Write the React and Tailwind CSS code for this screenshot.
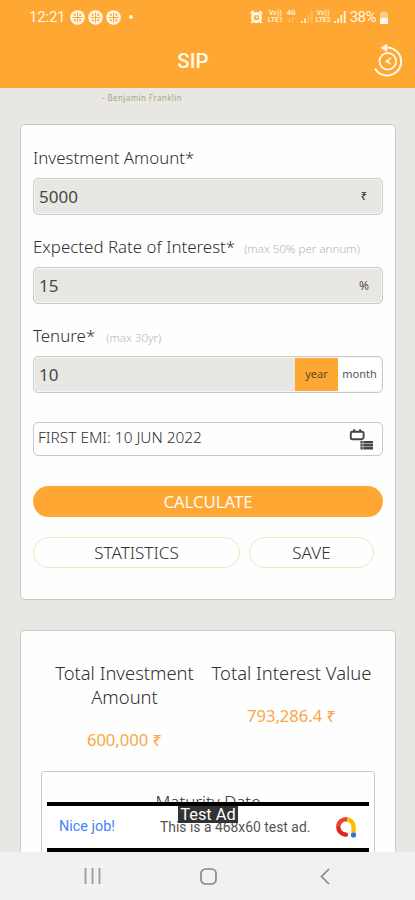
// ⏰ STATUS BAR ICONS
function ChatDot() {
  return (
    <svg width="15" height="15" viewBox="0 0 15 15">
      <circle cx="7.5" cy="7.5" r="7.3" fill="#fff8e8" />
      <path d="M7.5 2.5v10M2.5 7.5h10" stroke="#ffa733" strokeWidth="1" />
      <path d="M4.8 3.8v2M10.2 3.8v2M4.8 9.2v2M10.2 9.2v2" stroke="#ffa733" strokeWidth="2" />
    </svg>
  );
}

function AlarmIcon() {
  return (
    <svg width="13" height="14" viewBox="0 0 13 14">
      <circle cx="6.5" cy="7.5" r="4.1" fill="none" stroke="#fff8e8" strokeWidth="2.8" />
      <path d="M.7 3.8 3.7 1M12.3 3.8 9.3 1M2.7 11.3 1.5 13M10.3 11.3l1.2 1.7" stroke="#fff8e8" strokeWidth="2" />
      <path d="M6.3 5v3l2-.8" stroke="#fff8e8" strokeWidth="1" fill="none" />
    </svg>
  );
}

function Signal({ weak }) {
  return (
    <svg width="12" height="12" viewBox="0 0 12 12" fill="#fff3dc">
      <path d="M0 10h1.8v2H0zM3.2 7.5H5V12H3.2z" />
      <path d="M6.4 4h1.8v8H6.4zM9.8 0h1.8v12H9.8z" opacity={weak ? 0.3 : 1} />
    </svg>
  );
}

function SimLabel({ line }) {
  return (
    <div className="flex w-[17px] flex-col items-center text-[7px] leading-[7px] font-bold text-[#fff3dc] opacity-90">
      <span>Vo))</span>
      <span>{line}</span>
    </div>
  );
}

// 🕑 HISTORY
function HistoryIcon() {
  return (
    <svg width="32" height="34" viewBox="0 0 32 34" fill="none" stroke="#fff8e8">
      <path d="M13 3.7A14 14 0 1 1 3 24.5" strokeWidth="2" />
      <path d="M10 4 14.2 1.2v5.2z" fill="#fff8e8" strokeWidth="1.6" />
      <circle cx="15.8" cy="17.3" r="8.3" strokeWidth="1.8" />
      <path d="m19 14-4.6 3.3 4.2 2.8" strokeWidth="1.3" />
      <circle cx="15.4" cy="17.3" r="1.8" fill="#fff8e8" stroke="none" />
    </svg>
  );
}

function CalendarIcon() {
  return (
    <svg width="25" height="21" viewBox="0 0 25 21" fill="none" stroke="#444">
      <path d="M13 10.3H3.2a1.4 1.4 0 0 1-1.4-1.4V4.2a1.4 1.4 0 0 1 1.4-1.4h10a1.4 1.4 0 0 1 1.4 1.4v4.5z" strokeWidth="1.9" />
      <path d="M5.2.3v3M11.2.3v3" strokeWidth="2" />
      <path d="M11.5 12H24v8.5H11.5z" fill="#444" stroke="none" />
      <path d="M11.5 14.6H24M11.5 17.6H24M14 12v8.5" stroke="#d8d8d8" strokeWidth=".7" />
    </svg>
  );
}

function AdLogo() {
  return (
    <svg width="22" height="22" viewBox="0 0 22 22" fill="none">
      <path d="M11 3.2A7.6 7.6 0 0 1 18.6 11v8" stroke="#fbbc04" strokeWidth="4.4" />
      <path d="M12 3.3A7.7 7.7 0 0 0 3.3 11" stroke="#ea4335" strokeWidth="4.4" />
      <path d="M3.3 10.8A7.7 7.7 0 0 0 11 18.6" stroke="#d92c20" strokeWidth="4.4" />
      <circle cx="11" cy="18.6" r="2.2" fill="#d92c20" />
      <circle cx="18.5" cy="19" r="2.6" fill="#2878ed" />
    </svg>
  );
}

function Field({ label, hint, value, children }) {
  return (
    <div className="h-[89px]">
      <div className="flex h-[42px] items-center pt-px whitespace-nowrap">
        <span className="text-[16.9px] font-light text-[#303030]">{label}</span>
        {hint}
      </div>
      <div className="flex h-[37px] items-stretch overflow-hidden rounded-[5px] border border-[#c9c9c7] bg-[#f6f6f4] p-px">
        <span className="flex flex-1 items-center bg-[#e8e7e3] pl-[4px] text-[17px] text-[#484848]">{value}</span>
        {children}
      </div>
    </div>
  );
}

export default function App() {
  return (
    <div className="relative flex h-[900px] w-[415px] flex-col overflow-hidden bg-[#e8e7e3] font-['Noto_Sans','Open_Sans',sans-serif]">

      {/* HEADER */}
      <header className="h-[88px] shrink-0 bg-[#ffa733] font-['Roboto',sans-serif] text-[#fff8e8]">
        <div className="flex h-[34px] items-center pr-[27px] pl-[29px]">
          <span className="w-[41px] text-[15px] tracking-[-0.2px]">12:21</span>
          <div className="flex gap-[3px]">
            <ChatDot />
            <ChatDot />
            <ChatDot />
          </div>
          <span className="ml-[8px] size-[4px] rounded-full bg-[#fff8e8]" />
          <div className="ml-auto flex items-center">
            <AlarmIcon />
            <div className="ml-[4px]"><SimLabel line="LTE1" /></div>
            <div className="mr-[5px] ml-[3px] flex flex-col items-center text-[7px] leading-[7px] font-bold opacity-90">
              <span>4G</span>
              <span>↓↑</span>
            </div>
            <Signal weak />
            <div className="mx-[2px]"><SimLabel line="LTE2" /></div>
            <Signal />
            <span className="ml-[4px] text-[15px] tracking-[-0.5px]">38%</span>
            <svg className="ml-[4px]" width="8" height="13" viewBox="0 0 8 13" fill="#fff8e8">
              <path d="M2.5 0h3v1.5H8V7H0V1.5h2.5z" opacity=".45" />
              <path d="M0 7h8v6H0z" />
            </svg>
          </div>
        </div>
        <div className="flex h-[54px] items-center pr-[11px] pl-[14px]">
          <h1 className="flex-1 text-center text-[20.5px] font-medium">SIP</h1>
          <HistoryIcon />
        </div>
      </header>

      {/* PAGE */}
      <main className="flex h-[764px] shrink-0 flex-col overflow-hidden pr-[19px] pl-[20px]">
        <p className="h-[36px] shrink-0 pt-[4px] pl-[82px] text-[8px] leading-[12px] tracking-[0.4px] text-[#a7a77f]">
          - Benjamin Franklin
        </p>

        {/* CALCULATOR */}
        <section className="h-[476px] shrink-0 rounded-[5px] border border-[#c9c9c6] bg-[#fefefe] px-[12px] pt-[11px]">
          <Field label="Investment Amount*" value="5000">
            <span className="flex items-center bg-[#e8e7e3] pr-[14px] text-[11px] font-medium text-[#333]">₹</span>
          </Field>
          <Field
            label="Expected Rate of Interest*"
            value="15"
            hint={<span className="mt-[4px] ml-[9px] text-[11.6px] font-light text-[#b5b5b5]">(max 50% per annum)</span>}
          >
            <span className="flex items-center bg-[#e8e7e3] pr-[12px] text-[12px] text-[#555]">%</span>
          </Field>
          <Field
            label="Tenure*"
            value="10"
            hint={<span className="mt-[4px] ml-[11px] text-[11.6px] font-light text-[#b5b5b5]">(max 30yr)</span>}
          >
            <button className="w-[43px] bg-[#ffa733] text-[11px] text-[#654a25]">year</button>
            <button className="w-[43px] bg-white text-[11px] text-[#555]">month</button>
          </Field>

          <div className="mt-[19px] flex h-[34px] items-center justify-between rounded-[5px] border border-[#c9c9c9] pr-[8px] pl-[4px]">
            <span className="-mt-[2px] text-[15.4px] font-light text-[#303030]">FIRST EMI: 10 JUN 2022</span>
            <CalendarIcon />
          </div>

          <button className="mt-[30px] h-[31px] w-full rounded-full bg-[#ffa733] text-[16.7px] text-[#fffaf0]">
            CALCULATE
          </button>
          <div className="mt-[20px] flex gap-[9px] text-[17.1px] font-light text-[#303030]">
            <button className="h-[31px] w-[207px] rounded-full border border-[#eee5c1]">STATISTICS</button>
            <button className="h-[31px] w-[125px] rounded-full border border-[#eee5c1]">SAVE</button>
          </div>
        </section>

        {/* RESULT */}
        <section className="mt-[30px] h-[260px] shrink-0 rounded-[5px] border border-[#c9c9c6] bg-[#fefefe] px-[20px] pt-[30px]">
          <div className="flex h-[110px] text-center text-[18.4px] leading-[24px] font-light text-[#303030]">
            <div className="w-[167px]">
              <p>Total Investment Amount</p>
              <p className="mt-[19px] text-[16.6px] font-normal text-[#f9a743]">600,000 ₹</p>
            </div>
            <div className="w-[167px] whitespace-nowrap">
              <p>Total Interest Value</p>
              <p className="mt-[19px] text-[16.6px] font-normal text-[#f9a743]">793,286.4 ₹</p>
            </div>
          </div>
          <div className="h-[130px] rounded-[3px] border border-[#c9c9c9] pt-[18px] text-center text-[17px] leading-[24px] font-light text-[#303030]">
            Maturity Date
          </div>
        </section>
      </main>

      {/* AD BANNER */}
      <div className="absolute top-[802px] left-[47px] h-[50px] w-[322px] border-t-[4px] border-b-[4px] border-black bg-white font-['Roboto',sans-serif]">
        <div className="flex h-[42px] items-center pr-[12px] pl-[12px]">
          <span className="w-[101px] text-[14.4px] text-[#4285f4]">Nice job!</span>
          <span className="flex-1 text-[13.9px] whitespace-nowrap text-[#555]">This is a 468x60 test ad.</span>
          <AdLogo />
        </div>
        <span className="absolute top-0 left-[131px] h-[17px] w-[60px] bg-[#333] text-center text-[16.4px] leading-[17px] whitespace-nowrap text-white">
          Test Ad
        </span>
      </div>

      {/* SYSTEM NAVIGATION */}
      <nav className="relative flex h-[48px] shrink-0 items-center bg-[#f1f1f1] pl-[84px]">
        <svg width="17" height="16" viewBox="0 0 17 16" stroke="#999" strokeWidth="1.8">
          <path d="M1.5 0v16M8.5 0v16M15.5 0v16" />
        </svg>
        <svg className="ml-[99px]" width="17" height="17" viewBox="0 0 17 17" fill="none" stroke="#888" strokeWidth="1.7">
          <rect x="1" y="1" width="15" height="15" rx="4.5" />
        </svg>
        <svg className="ml-[103px]" width="10" height="17" viewBox="0 0 10 17" fill="none" stroke="#888" strokeWidth="1.7">
          <path d="M9 1 1.5 8.5 9 16" />
        </svg>
      </nav>

    </div>
  );
}
